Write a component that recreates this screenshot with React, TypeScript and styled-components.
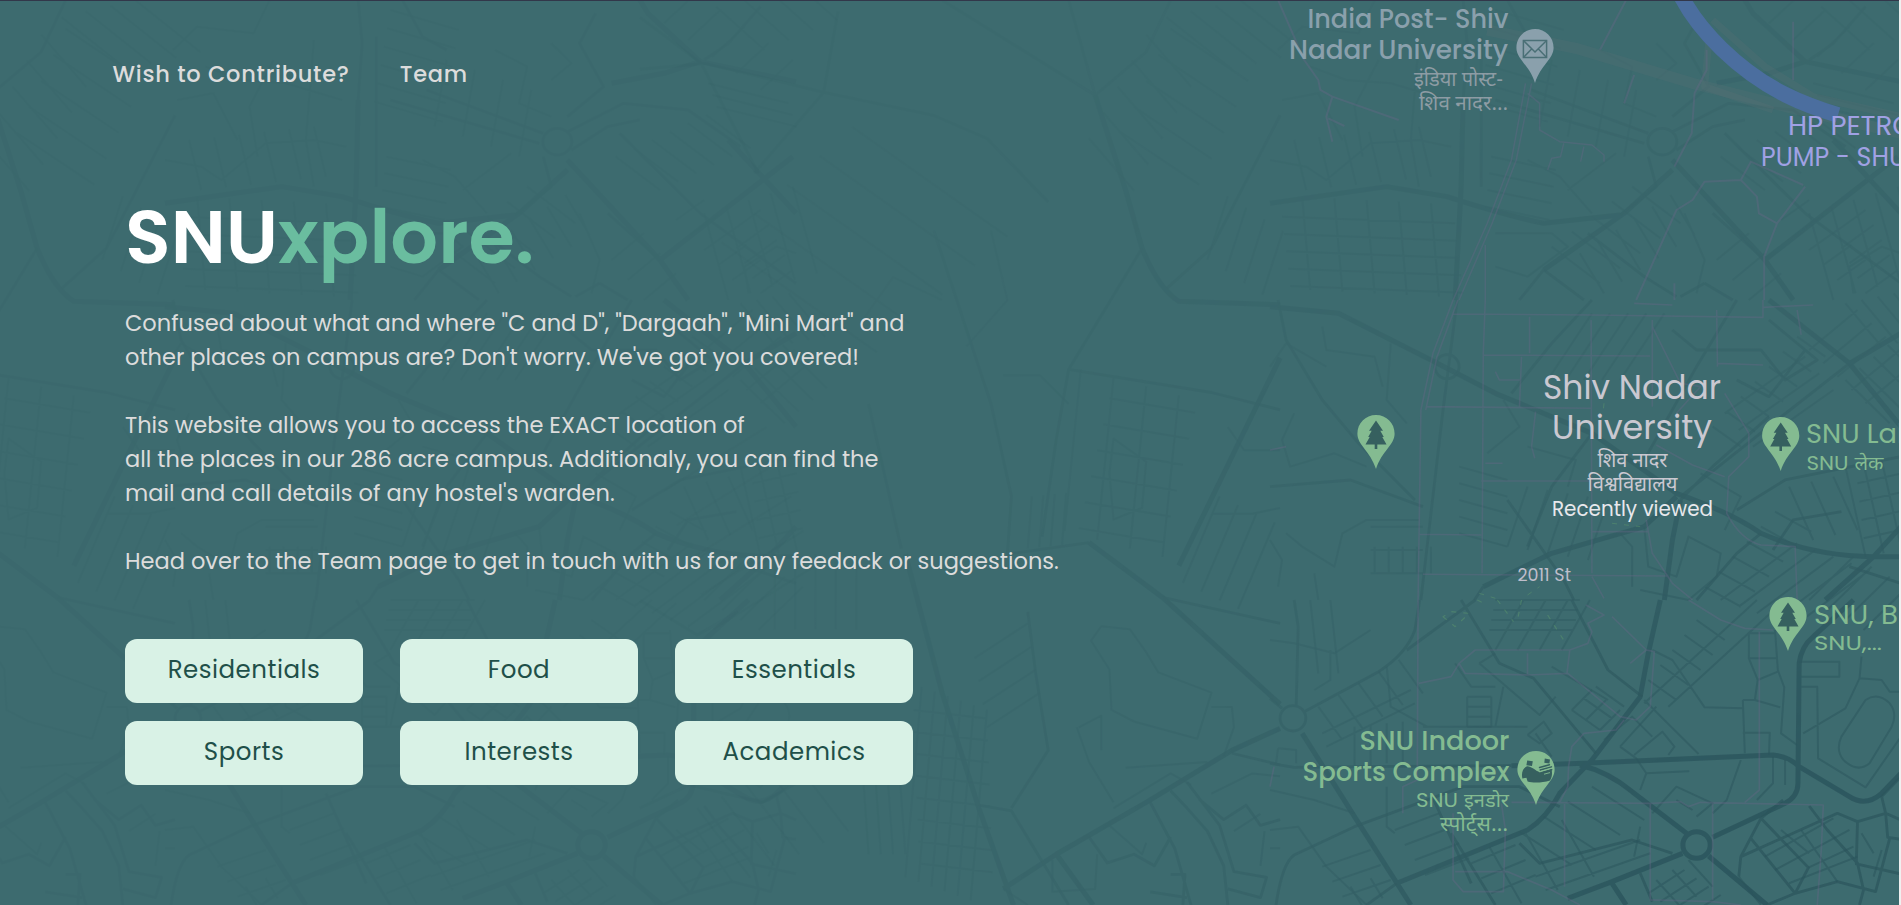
import React from 'react';
import styled, { createGlobalStyle } from 'styled-components';

const GlobalStyle = createGlobalStyle`
  *, *::before, *::after { box-sizing: border-box; }
  html, body { margin: 0; padding: 0; background: #f0f0f0; overflow: hidden; }
`;

const Page = styled.div`
  position: relative;
  width: calc(100vw - 2px);
  height: 100vh;
  overflow: hidden;
  border-top: 1px solid #32374a;
  background: #3d6b6f;
  font-family: Poppins, Inter, sans-serif;
`;

const MapSvg = styled.svg`
  position: absolute;
  left: 0;
  top: -1px;
  display: block;
`;

const Content = styled.div`
  position: relative;
  display: flex;
  flex-direction: column;
`;

const Nav = styled.nav`
  display: flex;
  gap: 50px;
  padding: 57px 0 0 112.5px;
`;

const NavLink = styled.a`
  color: #dcdcdc;
  font-size: 22.5px;
  font-weight: 500;
  line-height: 33px;
  letter-spacing: 0.75px;
`;

const Hero = styled.main`
  display: flex;
  flex-direction: column;
  align-items: flex-start;
  padding: 100px 0 0 125px;
`;

const Title = styled.h1`
  margin: 0;
  color: #fff;
  font-size: 75px;
  font-weight: 600;
  line-height: 91px;
`;

const Accent = styled.span`
  color: #6abd9f;
`;

const Copy = styled.div`
  display: flex;
  flex-direction: column;
  gap: 34px;
  margin-top: 24px;
`;

const Paragraph = styled.p`
  margin: 0;
  color: #dcdcdc;
  font-size: 22.5px;
  line-height: 34px;
  white-space: nowrap;
`;

const ButtonGrid = styled.div`
  display: grid;
  grid-template-columns: repeat(3, 238px);
  gap: 18px 37px;
  margin-top: 61px;
`;

const CategoryButton = styled.button`
  height: 64px;
  padding: 0 0 3px;
  border: 0;
  border-radius: 12px;
  background: #d9f2e6;
  color: #1f5049;
  font-family: inherit;
  font-size: 24.5px;
  font-weight: 400;
  letter-spacing: 0.5px;
`;

const Road = styled.path<{ $w: number }>`
  fill: none;
  stroke: #29525a;
  stroke-width: ${(p) => p.$w}px;
  stroke-linejoin: round;
  vector-effect: non-scaling-stroke;
`;

const Lane = styled.path<{ $w?: number }>`
  fill: none;
  stroke: rgba(104, 102, 136, 0.36);
  stroke-width: ${(p) => p.$w ?? 2}px;
  stroke-linejoin: round;
  vector-effect: non-scaling-stroke;
`;

const Highway = styled(Lane)`
  stroke: rgba(98, 114, 120, 0.2);
`;

const River = styled.path`
  fill: none;
  stroke: #4b6e9f;
  stroke-width: 15.5px;
`;

const Hedge = styled(Lane)`
  stroke: rgba(110, 175, 110, 0.32);
  stroke-dasharray: 5 7;
`;

const Label = styled.text<{ $size: number; $weight?: number }>`
  font-family: Poppins, 'Noto Sans Devanagari', sans-serif;
  font-size: ${(p) => p.$size}px;
  font-weight: ${(p) => p.$weight ?? 400};
`;

const HindiLabel = styled(Label)`
  font-family: 'Noto Sans Devanagari', 'Noto Sans', sans-serif;
`;

const GREEN = '#84bb91';
const GREY = '#8aa0ac';
const VIOLET = '#a0a1e4';
const PALE = '#cac8d1';
const CUT = '#36605f';

/** n short parallel strokes starting at (x, y), each (dx, dy) long, spaced by (sx, sy). */
const hatch = (x: number, y: number, dx: number, dy: number, sx: number, sy: number, n: number) =>
  Array.from({ length: n }, (_, i) => `M${x + i * sx} ${y + i * sy}l${dx} ${dy}`).join('');

type Sheet = { transform: string; major: string; mid: string; minor: string };

const SHEETS: Sheet[] = [
  {
    transform: 'translate(1270 0) scale(.4024 .3333)',
    major:
      'M0 610L290 560L440 590Q580 645 680 670L870 645M680 810L880 640L1000 510M1000 480L1230 780L1300 900M1230 780L1400 620L1560 470M1110 250L1240 220L1330 185L1568 245M1330 185L1200 40L1180 0M480 300L475 560L460 900M1400 420L1568 640',
    mid:
      'M939 425a36 40 0 1 0 72 0a36 40 0 1 0 -72 0M1340 180L1400 130L1480 20M650 270L940 400M560 300L930 430M1000 395L1140 310L1300 330L1430 440M1010 450L1100 380L1180 360M480 0L490 130L480 300M525 110L525 560M870 645L960 560L940 470M1080 850L1150 900M1010 890L930 830L790 700M680 810L620 900M680 810L780 900M1130 400L1330 640L1568 850M1230 780L1100 640M1070 40L1030 130L1090 260L1000 350M590 0L640 110L700 150M1020 890L1080 850',
    minor:
      hatch(560, 30, 170, 60, -8, 55, 6) +
      hatch(60, 420, 30, 150, 62, -8, 6) +
      hatch(80, 590, 20, 280, 80, 5, 5) +
      hatch(30, 650, 430, 20, 5, 52, 5) +
      hatch(550, 470, 160, 40, -5, 50, 4) +
      hatch(700, 180, -30, 200, 70, 30, 4) +
      hatch(770, 760, 60, 120, 45, -35, 6) +
      hatch(900, 560, 120, 110, -50, 45, 5) +
      hatch(1120, 470, 110, 100, 45, -25, 6) +
      hatch(1190, 700, -80, 80, 40, 60, 3) +
      hatch(1270, 660, 70, -60, 35, 45, 5) +
      hatch(1400, 700, 80, -70, 20, 45, 5) +
      hatch(1340, 640, 60, 260, 55, -20, 5) +
      hatch(1240, 70, 80, -90, 60, 50, 5) +
      hatch(1370, 20, 120, 130, 60, -30, 4) +
      hatch(1350, 250, 200, 60, 10, 35, 3) +
      'M0 480L90 500L140 540L250 430L370 420L450 440M20 150L80 80L220 100L260 0M100 200L190 240L300 250L440 300M30 300L120 280L180 420M270 180L210 320L230 470M370 120L350 420L370 560M640 480L720 530L800 640M740 570L860 460M1030 640L1080 780L1060 880M960 240L1010 190L960 130M820 150L900 200L880 310L960 350M560 700L700 700L740 740L640 830L560 800M1450 880L1440 800L1520 740L1568 760',
  },
  {
    transform: 'translate(1270 300) scale(.4024 .3333)',
    major:
      'M0 20L170 40L400 180L560 280L800 400L1010 580Q1150 640 1220 700Q1350 768 1500 770L1568 770M1240 0L1440 190L1568 380M530 860L700 760L930 680L1010 590M1380 900L1500 770L1568 680M980 900L1000 720L1020 600M1440 190L1568 100',
    mid:
      'M410 200a30 36 0 1 0 60 0a30 36 0 1 0 -60 0M375 900L400 640L430 330L465 0M1020 590L1250 370L1440 190M590 600L730 840L755 900M530 860L508 900M930 480L1060 200L1160 0M1160 630L1280 540L1568 470M20 0L40 120L130 300L220 430L360 600M0 560L200 540L380 620M800 400L700 560L640 740M1020 600L1100 500L1240 350M1250 750L1300 660L1420 635M1330 150L1240 290L1160 240M800 0L700 130L600 280M1000 90L1060 150L1220 150L1280 240L1360 180L1240 60M1060 900L1160 760L1220 700M1568 850L1440 800',
    minor:
      hatch(470, 500, 120, 40, 0, 50, 5) +
      hatch(260, 740, 0, 80, 35, 0, 5) +
      hatch(250, 680, 130, 0, 0, 70, 3) +
      hatch(800, 40, -110, 200, 45, 0, 5) +
      hatch(1100, 380, 70, 60, 35, -45, 7) +
      hatch(1130, 340, 200, -170, 35, 50, 3) +
      hatch(1290, 560, 60, 160, 55, -15, 3) +
      hatch(1430, 500, 50, 270, 45, -10, 3) +
      hatch(1460, 550, 110, -30, 5, 55, 4) +
      hatch(1340, 150, 120, -120, 35, 40, 5) +
      hatch(1430, 240, 110, 130, 35, -35, 4) +
      hatch(1430, 10, 90, 130, 40, -10, 4) +
      hatch(1080, 860, 90, 60, 35, -45, 6) +
      hatch(1120, 900, 190, -170, 45, 20, 5) +
      hatch(1340, 900, 110, -130, 45, 30, 4) +
      hatch(640, 560, -50, 180, 50, 10, 5) +
      'M130 80L140 150L260 170L280 260M60 340L30 420L50 500L160 460L240 500M40 700L80 740L160 800L180 700L240 660L370 660M0 720L30 780L20 860M110 820L120 900M870 700L900 740L900 860M930 680L940 800L1010 830L1040 710L1120 760L1110 830L1040 900L920 870M1070 520L1170 590L1130 690M640 440L760 480L740 560M540 460L620 380L580 300M140 200L40 130L0 200M300 130L290 300L340 370',
  },
  {
    transform: 'translate(1270 600) scale(.4024 .3333)',
    major:
      'M600 497L780 490L1250 465Q1290 470 1315 500L1440 590Q1480 622 1520 580L1568 520M740 895L850 845L1025 760M1100 712L1280 610Q1312 590 1312 550L1315 190Q1320 140 1350 110L1450 0M770 495Q840 515 900 575L1035 700M1090 768L1235 915M1026 735a34 40 0 1 0 68 0a34 40 0 1 0 -68 0M80 400L210 650L350 915M315 850L640 690Q690 650 720 580L800 480L920 290L940 160L970 0M850 850L885 915',
    mid:
      'M0 490L60 502L220 500L600 497M750 0L840 210L925 290M85 335L270 215Q340 160 360 90L372 0M340 150L510 0M25 355a32 38 0 1 0 64 0a32 38 0 1 0 -64 0M475 0L570 190L655 235L810 460M450 700L560 915M15 915Q30 790 60 765L210 680L480 560L620 560L720 620M920 820L950 905M65 320L70 80L60 0M0 295L30 325M315 850L240 915M400 580L500 850M620 730L670 790L900 720L1000 760',
    minor:
      hatch(130, 800, 120, -50, 25, 45, 3) +
      hatch(310, 690, 110, -50, 25, 45, 4) +
      hatch(500, 790, 110, -55, 25, 45, 3) +
      hatch(545, 740, 80, 170, 90, -40, 3) +
      hatch(800, 560, 130, 100, -60, 45, 4) +
      hatch(660, 830, 260, -110, 25, 40, 2) +
      hatch(490, 290, 60, 0, 0, 30, 4) +
      hatch(490, 290, 0, 90, 60, 0, 2) +
      hatch(545, 90, 210, 0, 5, -30, 4) +
      hatch(560, 150, 70, -150, 55, 0, 4) +
      hatch(750, 330, 70, 60, 30, -35, 3) +
      hatch(750, 330, 50, -60, 35, 30, 3) +
      hatch(940, 240, 70, 60, 30, -45, 5) +
      hatch(930, 310, 280, -310, 60, 10, 2) +
      hatch(120, 320, 60, 100, 50, -35, 5) +
      hatch(130, 400, 220, -130, 10, 40, 2) +
      hatch(210, 380, 0, 120, 40, -5, 4) +
      hatch(100, 0, 20, 220, 50, 0, 2) +
      hatch(940, 880, 90, -70, 30, 25, 4) +
      hatch(960, 840, 60, 80, 40, -30, 3) +
      hatch(200, 860, 30, 60, 50, -25, 2) +
      'M1480 300Q1510 275 1540 310Q1560 340 1545 380L1490 490Q1460 520 1425 480Q1405 450 1420 410ZM1315 185L1415 185L1415 230L1320 230M1320 260L1360 260L1362 475L1480 562L1568 410M1325 400L1430 325L1465 235L1470 170M1465 235L1520 240L1540 275L1568 275M1190 100L1190 175L1212 240L1205 300L1268 322M1255 90L1262 210L1278 262L1270 400L1310 435M1190 175L1258 175M1212 240L1262 215M1190 100L1255 100M1175 300L1180 460M1175 300L1205 300M1175 398L1242 398L1240 465M950 150L1000 180L1080 322L1175 325M930 300L1065 462M870 440L960 320M905 465L975 395L1005 440L990 465M870 440L910 475L935 520L1040 514L935 520L920 570M1250 470L1250 550L1210 600M1170 480L1135 600L1100 640M1280 480L1280 555',
  },
  {
    transform: 'translate(1270 600) scale(.4024 .3333)',
    major: '',
    mid:
      'M1165 830L1170 770L1410 640L1460 665L1530 640L1568 660M1170 770L1220 655L1275 600M1195 715L1305 880L1235 915M1220 655L1338 803L1305 880L1410 845L1505 875L1540 715M1340 618L1385 690L1460 790L1475 870L1465 915M1460 665L1457 792L1568 822M1530 640L1520 590L1568 530M1530 640L1535 712L1568 718',
    minor:
      'M1255 810L1440 690M1320 690L1410 845M1338 803L1450 740M1230 770L1400 655M1270 690L1340 760M1290 850L1460 770M1165 830L1220 915M950 640L1010 560L1100 610L1060 650M1010 600L1050 630M520 190L670 345L710 290M520 190L560 160M640 405L680 365L700 400L670 430L640 405M380 380L640 380M580 260L560 380M390 380L300 320L290 200M20 445L65 450L65 490M20 445L15 490M0 570L110 600L210 640M0 690L70 680L140 800L240 915M290 560L290 680L310 700M0 745L25 745M0 120L60 130L160 160L250 90M700 200L840 300M830 420L900 350L950 410M1470 700L1500 760M1520 750L1500 830M905 770L920 680M660 400L700 470M460 190L500 260L560 260M150 150L150 240L110 270',
  },
  {
    transform: 'translate(640 0) scale(.4082 .5772)',
    major:
      'M890 1540L1020 1480L1240 1390L1450 1300L1568 1262M650 960L740 1200L830 1400L915 1568M1115 165L1190 330L1230 430Q1270 500 1320 522L1568 528M1100 940L1280 1035L1568 1220M1320 980L1568 620M1020 1480L1110 1568',
    mid:
      'M0 120L160 110L450 160L720 200L850 240L1000 350M450 160L485 20M280 300L450 160M1050 0L1115 165L1240 90L1300 0M1230 430L1050 640L1020 760L985 930M1050 640L1400 680L1568 710M1568 200L1400 430L1290 500M720 400L860 700L910 860L900 960L1100 940M910 1400L1000 1300L970 1170L950 1060M1280 1035L1568 1080M1450 1305L1568 1325M830 1395L910 1405L1050 1568M0 1040L140 1100L240 1060M0 1400L120 1360L300 1390L400 1350M740 0L1115 165M640 950L560 700M0 30L150 110L290 300',
    minor:
      hatch(690, 1190, -40, 330, 32, 8, 6) +
      hatch(670, 1230, 180, 15, 2, 38, 8) +
      hatch(1240, 60, 110, 90, -35, 45, 5) +
      hatch(1290, 30, 160, 90, 60, -10, 4) +
      hatch(1180, 230, 190, 90, 30, -45, 5) +
      hatch(1150, 690, 210, 25, -15, 45, 6) +
      hatch(1080, 640, -40, 280, 80, 15, 4) +
      hatch(1390, 450, 50, -110, 45, 20, 4) +
      hatch(960, 860, -10, 90, 28, -2, 4) +
      hatch(1330, 1010, 90, -150, 45, 15, 4) +
      hatch(820, 1140, 130, -60, 10, 40, 4) +
      hatch(60, 850, 250, -110, 30, 60, 5) +
      hatch(200, 420, 380, 190, 80, -50, 5) +
      hatch(540, 1280, 20, 200, 30, 0, 4) +
      hatch(330, 960, 0, 130, 50, 0, 5) +
      hatch(140, 1400, 130, 120, 60, -20, 5) +
      'M1105 1110L1130 1085L1200 1090L1240 1130L1270 1165L1400 1200L1365 1280L1210 1250L1155 1230L1150 1160ZM1070 1260L1100 1320L1160 1390M1075 1260L1130 1240L1130 1300M1400 1225L1450 1225L1455 1260L1430 1310M1190 1330L1390 1320M890 650L980 650L1050 700M860 400L900 520L800 600M540 560L620 480L740 520M1160 760L1240 800L1230 880L1160 900L1150 820ZM1440 740L1480 780L1568 780M1400 890L1500 890L1568 880',
  },
  {
    transform: 'translate(640 0) scale(.4082 .5772)',
    major: '',
    mid:
      'M1300 1370L1340 1400L1390 1440L1430 1500L1440 1568M1340 1355L1420 1430L1455 1510L1535 1520L1520 1555L1440 1540M1100 1450L1145 1495L1210 1480L1260 1500L1300 1450M1250 1390L1310 1470L1350 1568M1370 1385L1430 1420L1485 1395L1520 1430L1568 1420M1300 1515L1335 1515L1330 1568M1250 1545L1340 1555',
    minor:
      'M1150 1430L1230 1480L1240 1460M1120 1480L1115 1540L1010 1545L1010 1490M1160 1400L1300 1340L1350 1360M1455 1440L1520 1410M1530 1440L1520 1500M890 1540L950 1568M1400 1375L1500 1340L1568 1345',
  },
];

const StreetNetwork = () => (
  <g id="streets">
    {SHEETS.map((s, i) => (
      <g key={i} transform={s.transform}>
        <Road $w={2} opacity={0.5} d={s.minor} />
        <Road $w={2.8} opacity={0.66} d={s.mid} />
        <Road $w={5} opacity={0.8} d={s.major} />
      </g>
    ))}
  </g>
);

const CampusLanes = () => (
  <>
    <g transform="translate(1270 0) scale(.4024 .3333)">
      <Highway $w={11} d="M540 90L760 145L1050 250L1300 325L1568 400" />
      <Highway $w={7} d="M1090 130L1080 260L1250 330M1100 60L1230 200L1350 290L1568 350" />
      <Lane d="M20 0L85 180L120 240L125 270L155 290L320 360M155 290L140 350L155 425M145 355L185 378" />
      <Lane $w={1.5} d="M635 250L600 480L540 670L455 900M650 250L612 480L552 670L470 900M640 280L670 310L670 390L720 425L800 435L830 465L830 485M730 430L722 470L700 475L690 510M780 440L772 485M535 735L535 900" />
      <Lane d="M885 0L820 150M905 225L880 310M1300 65L1300 240M1085 150L1085 210L1055 280L1048 400L1005 500M1330 560L1260 670L1228 770L1228 900M910 900L1010 630L1050 600L1080 545L1170 540L1210 590L1215 640L1260 670M1170 540L1195 485L1325 555M1005 850L1005 900" />
    </g>
    <g transform="translate(1270 300) scale(.4024 .3333)">
      <Lane $w={1.6} d="M455 0L405 160L375 330L368 900M467 0L415 170L387 330M535 0L530 160L527 820M455 42L800 45L1225 52L1225 0M645 50L645 160M530 165L945 168M950 60L950 320M625 170L620 320M560 215L570 240L620 240M390 320L800 325M660 335L650 440L658 475M535 490L578 490M525 543L800 543M798 60L800 820M370 703L525 705M380 823L990 828M800 695L940 695M935 660L950 760L1000 850L1050 900M1110 30L1112 200M1110 190L1225 195M950 80L1020 250L1070 260L1010 340M1130 280L1190 400L1190 470L1140 530L1135 640Q1170 720 1220 735L1305 740L1310 900M960 435L1050 495L1130 530M800 830L830 895M0 450L40 440M905 10L1000 15M1225 22L1350 15M1310 30L1320 105" />
      <Hedge $w={1} d="M520 880L560 895M640 885L670 860M830 310L828 335M850 670L920 680" />
    </g>
    <g transform="translate(1270 600) scale(.4024 .3333)">
      <Lane $w={1.7} d="M368 0L366 540L330 560L330 640M370 250L450 230L470 190L510 150L745 150L790 130L800 95L790 70L830 45L785 15M470 190L485 220L640 225L740 220L870 350L910 360L945 320L955 155L935 150L850 50M640 160L640 225M745 150L738 220M935 150L895 190M880 360L860 390L780 400L750 440L742 500L740 560L720 607M600 607L950 610L1020 605L1040 620L1070 607L1375 615L1370 750L1360 915M1216 95L1216 570L1180 607M1040 0L1120 60L1180 85L1250 90M732 610L732 860M945 610L945 900L1100 905L1170 915M1100 610L1100 900M455 640L455 840L480 875L580 875L585 690L575 610M460 815L590 815L700 870L770 915M10 500L0 560" />
      <Hedge $w={1.2} d="M430 50L460 80L495 40L450 35ZM515 0L540 15M565 0L605 65M625 0L615 60M690 45L735 130" />
    </g>
  </>
);

const PIN =
  'M0 0C10.6 0 18.6 8.2 18.6 18.7C18.6 30 6 35.5 0 54C-6 35.5 -18.6 30 -18.6 18.7C-18.6 8.2 -10.6 0 0 0Z';

type PinProps = { x: number; y: number; kind: 'tree' | 'mail' | 'sports' };

const Pin = ({ x, y, kind }: PinProps) => (
  <g transform={`translate(${x} ${y})`}>
    <path d={PIN} fill={kind === 'mail' ? GREY : GREEN} />
    {kind === 'tree' && (
      <path
        fill={CUT}
        d="M0 5.5L7 15.8H4.3L7.8 22H6.3L10.5 29.5H1.3V34H-1.3V29.5H-10.5L-6.3 22H-7.8L-4.3 15.8H-7Z"
      />
    )}
    {kind === 'mail' && (
      <g fill="none" stroke="#4a6f76" strokeWidth={1.5}>
        <rect x={-11.6} y={11.5} width={23.2} height={17} />
        <path d="M-11.6 11.5L0 23L11.6 11.5M-11.6 28.5L-3.4 20M11.6 28.5L3.4 20" />
      </g>
    )}
    {kind === 'sports' && (
      <g fill={CUT}>
        <path d="M-8.8 9.5L-3.2 10.2L-4 15L-9.6 14.3ZM8.8 7.4L14 8.4L13.4 12.6L8.3 11.8Z" />
        <path d="M-13.6 27.5C-15 22 -13 17 -9 15.3C-5 15 -1 19.5 4 21.4L15.5 18C16.4 22 16.2 26 14 29.5C6 32 -3 32 -8.4 30.6L-9.6 26.8Z" />
        <path
          d="M3.5 16.5L13.5 13.8M4.2 19L15.5 15.8M5 21.6L15.8 18.8"
          stroke={CUT}
          strokeWidth={1.4}
          strokeLinecap="round"
        />
        <path d="M5 20.3L15 17.4M8 23.2L14 21.6" stroke={GREEN} strokeWidth={0.9} />
      </g>
    )}
  </g>
);

type PlaceProps = {
  x: number;
  y: number;
  w: number;
  size: number;
  fill: string;
  weight?: number;
  hindi?: boolean;
  children: string;
};

const Place = ({ x, y, w, size, fill, weight, hindi, children }: PlaceProps) => {
  const Text = hindi ? HindiLabel : Label;
  return (
    <Text x={x} y={y} textLength={w} lengthAdjust="spacingAndGlyphs" fill={fill} $size={size} $weight={weight}>
      {children}
    </Text>
  );
};

const CampusMap = () => (
  <MapSvg width={1901} height={905} viewBox="0 0 1901 905">
    <defs>
      <radialGradient id="fade" gradientUnits="userSpaceOnUse" cx={1800} cy={960} r={1150}>
        <stop offset="0" stopColor="#fff" />
        <stop offset="0.25" stopColor="#fff" stopOpacity={0.82} />
        <stop offset="0.5" stopColor="#fff" stopOpacity={0.37} />
        <stop offset="0.8" stopColor="#fff" stopOpacity={0.17} />
        <stop offset="1" stopColor="#fff" stopOpacity={0.09} />
      </radialGradient>
      <mask id="streetFade" maskUnits="userSpaceOnUse" x={0} y={0} width={1901} height={905}>
        <rect width={1901} height={905} fill="url(#fade)" />
      </mask>
    </defs>
    <g mask="url(#streetFade)">
      <StreetNetwork />
    </g>
    <use href="#streets" x={-1105} opacity={0.12} />
    <CampusLanes />
    <River d="M1680 -6C1698 30 1738 71 1786 95C1804 104 1818 109 1838 115" />

    <Place x={1307.5} y={27.5} w={201} size={26} weight={500} fill={GREY}>India Post- Shiv</Place>
    <Place x={1289} y={59} w={219} size={26} weight={500} fill={GREY}>Nadar University</Place>
    <Place x={1414} y={85.5} w={89} size={20} hindi fill="#8d9ca4">इंडिया पोस्ट-</Place>
    <Place x={1419} y={109.5} w={89} size={20} hindi fill="#8d9ca4">शिव नादर…</Place>
    <Pin x={1535} y={29} kind="mail" />

    <Place x={1788} y={134.7} w={126} size={26} fill={VIOLET}>HP PETRO</Place>
    <Place x={1761} y={166} w={145} size={26} fill={VIOLET}>PUMP - SHU</Place>

    <Place x={1543} y={398.5} w={178} size={33} fill={PALE}>Shiv Nadar</Place>
    <Place x={1552} y={438.5} w={160} size={33} fill={PALE}>University</Place>
    <Place x={1597.5} y={466.5} w={70} size={20} hindi fill={PALE}>शिव नादर</Place>
    <Place x={1587.5} y={491} w={90} size={20} hindi fill={PALE}>विश्वविद्यालय</Place>
    <Place x={1552} y={516.3} w={161} size={21} fill="#e8e8ec">Recently viewed</Place>
    <Place x={1517.5} y={580.7} w={53.5} size={17} fill="#bfbecb">2011 St</Place>

    <Pin x={1376} y={415} kind="tree" />
    <Pin x={1780.7} y={417} kind="tree" />
    <Place x={1806} y={443} w={105} size={26} fill={GREEN}>SNU Lak</Place>
    <Place x={1806.5} y={469.7} w={42} size={20} fill={GREEN}>SNU</Place>
    <Place x={1854.5} y={469.7} w={29} size={19} hindi fill={GREEN}>लेक</Place>

    <Pin x={1788} y={597} kind="tree" />
    <Place x={1814} y={624} w={84} size={26} fill={GREEN}>SNU, B</Place>
    <Place x={1814} y={650.3} w={68} size={20} fill={GREEN}>SNU,...</Place>

    <Place x={1359.5} y={749.5} w={150} size={26} weight={500} fill={GREEN}>SNU Indoor</Place>
    <Place x={1302.5} y={780.5} w={207} size={26} weight={500} fill={GREEN}>Sports Complex</Place>
    <Place x={1416} y={806.5} w={42} size={20} fill={GREEN}>SNU</Place>
    <Place x={1464} y={806.5} w={45} size={19} hindi fill={GREEN}>इनडोर</Place>
    <Place x={1440} y={831} w={68} size={20} hindi fill={GREEN}>स्पोर्ट्स…</Place>
    <Pin x={1536} y={751} kind="sports" />
  </MapSvg>
);

const CATEGORIES = ['Residentials', 'Food', 'Essentials', 'Sports', 'Interests', 'Academics'];

export default function App() {
  return (
    <>
      <GlobalStyle />
      <Page>
        <CampusMap />
        <Content>
          <Nav>
            <NavLink>Wish to Contribute?</NavLink>
            <NavLink>Team</NavLink>
          </Nav>
          <Hero>
            <Title>
              SNU<Accent>xplore.</Accent>
            </Title>
            <Copy>
              <Paragraph>
                Confused about what and where "C and D", "Dargaah", "Mini Mart" and
                <br />
                other places on campus are? Don't worry. We've got you covered!
              </Paragraph>
              <Paragraph>
                This website allows you to access the EXACT location of
                <br />
                all the places in our 286 acre campus. Additionaly, you can find the
                <br />
                mail and call details of any hostel's warden.
              </Paragraph>
              <Paragraph>
                Head over to the Team page to get in touch with us for any feedack or suggestions.
              </Paragraph>
            </Copy>
            <ButtonGrid>
              {CATEGORIES.map((name) => (
                <CategoryButton key={name}>{name}</CategoryButton>
              ))}
            </ButtonGrid>
          </Hero>
        </Content>
      </Page>
    </>
  );
}
